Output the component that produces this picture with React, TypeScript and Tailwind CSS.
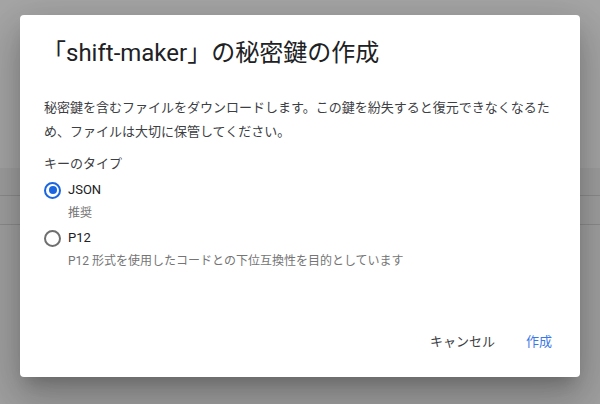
import React, { useState } from "react";

const FONT = { fontFamily: 'Roboto, "Noto Sans CJK JP", sans-serif' };

type Option = { id: string; label: string; hint: string };

const OPTIONS: Option[] = [
  { id: "json", label: "JSON", hint: "推奨" },
  { id: "p12", label: "P12", hint: "P12 形式を使用したコードとの下位互換性を目的としています" },
];

function Radio({ checked }: { checked: boolean }) {
  return (
    <span
      className={
        checked
          ? "flex h-[17px] w-[17px] shrink-0 items-center justify-center rounded-full border-2 border-[#1a66e0]"
          : "flex h-[17px] w-[17px] shrink-0 items-center justify-center rounded-full border-2 border-[#6f6f6f]"
      }
    >
      {checked && <span className="h-[8px] w-[8px] rounded-full bg-[#1a66e0]" />}
    </span>
  );
}

export default function App() {
  const [type, setType] = useState("json");

  return (
    <div className="relative h-[404px] w-[600px] overflow-hidden bg-[#a5a5a5]" style={FONT}>
      {/* page behind the scrim */}
      <div className="flex h-full flex-col">
        <div className="h-[168px] bg-[#a6a6a6]" />
        <div className="h-[28px] border-b border-[#8d8d8d] bg-[#9f9f9f]" />
        <div className="h-[29px] border-b border-[#8d8d8d] bg-[#a0a0a0]" />
        <div className="flex-1 bg-[#a1a1a1]" />
      </div>

      {/* dialog */}
      <div className="absolute left-[20px] top-[15px] flex h-[362px] w-[560px] flex-col rounded-[4px] bg-white shadow-[0_11px_15px_-7px_rgba(0,0,0,0.2),0_24px_38px_3px_rgba(0,0,0,0.14),0_9px_46px_8px_rgba(0,0,0,0.12)]">
        <div className="px-6 pt-[22px]">
          <h2 className="-ml-[2px] text-[24px] font-normal leading-[32px] text-[#202124]">「shift-maker」の秘密鍵の作成</h2>
          <p className="mt-[27px] text-[13px] leading-[24px] text-[#3c4043]">
            秘密鍵を含むファイルをダウンロードします。この鍵を紛失すると復元できなくなるため、ファイルは大切に保管してください。
          </p>
          <div className="mt-[8px] text-[13px] leading-[24px] text-[#3c4043]">キーのタイプ</div>
          <div className="mt-[2px] flex flex-col gap-[2px]">
            {OPTIONS.map((o) => (
              <label key={o.id} className="flex cursor-pointer flex-col" onClick={() => setType(o.id)}>
                <span className="flex h-[24px] items-center gap-[7px]">
                  <Radio checked={type === o.id} />
                  <span className="text-[13px] text-[#202124]">{o.label}</span>
                </span>
                <span className="pl-[24px] text-[12px] leading-[22px] text-[#757575]">{o.hint}</span>
              </label>
            ))}
          </div>
        </div>

        <div className="mt-auto flex justify-end gap-[15px] pb-[17px] pr-[20px]">
          <button className="h-9 px-2 text-[13px] text-[#3c4043]">キャンセル</button>
          <button className="h-9 px-2 text-[13px] text-[#3b78e7]">作成</button>
        </div>
      </div>
    </div>
  );
}
